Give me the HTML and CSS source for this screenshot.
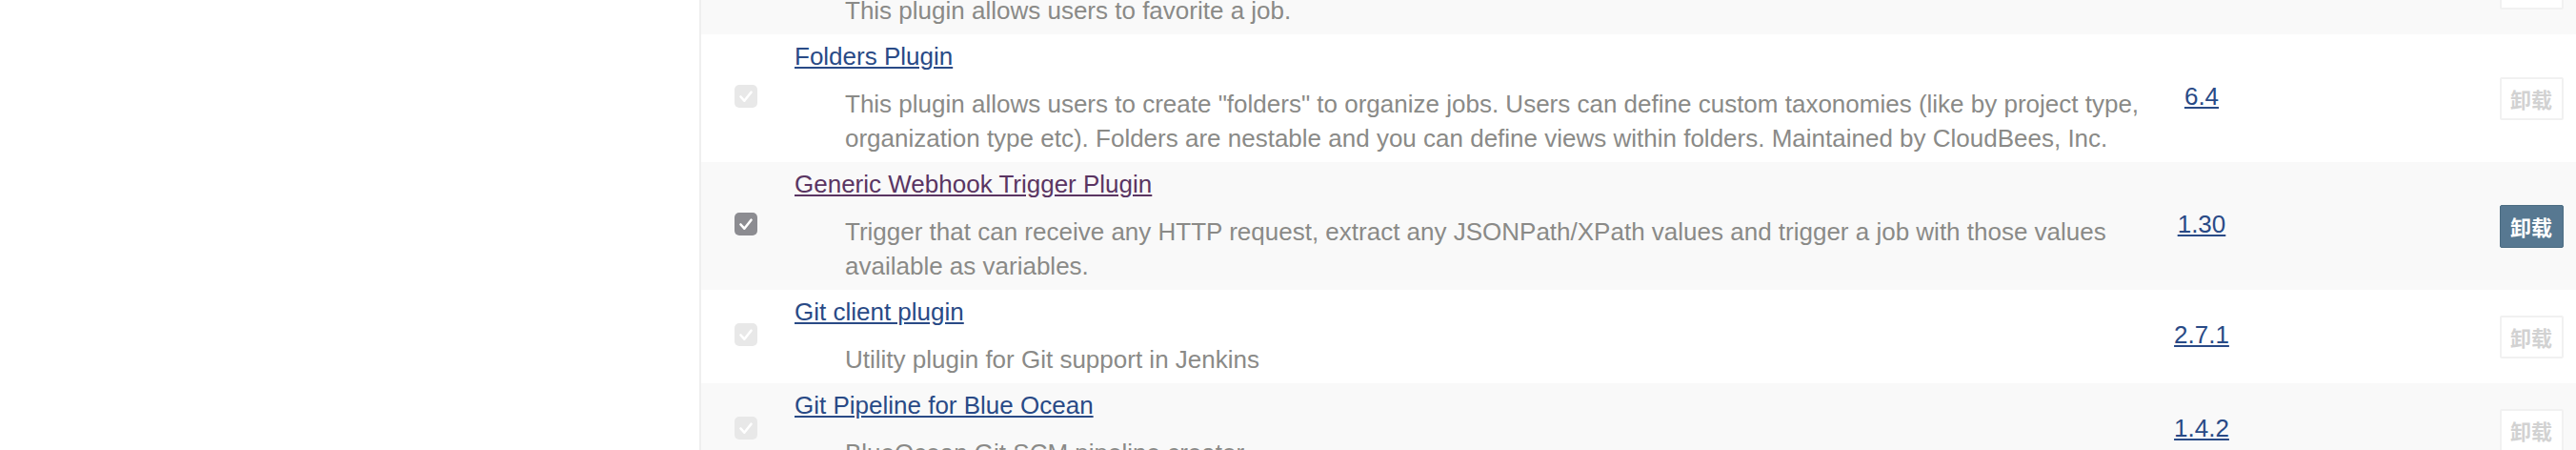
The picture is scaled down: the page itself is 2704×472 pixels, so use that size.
FILE: index.html
```html
<!DOCTYPE html>
<html lang="zh">
<head>
<meta charset="utf-8">
<title>插件管理</title>
<link rel="stylesheet" href="styles.css">
</head>
<body>
<div class="page">
  <div class="side-panel"></div>
  <div class="main-panel">
    <div class="plugins">
      <div class="plugin-row alt">
        <div class="cell-enable"><span class="checkbox disabled"><svg viewBox="0 0 24 24"><path d="M6.5 12.5l3.8 4.2 7.2-9"/></svg></span></div>
        <div class="cell-name">
          <a class="plugin-link" href="#">Favorite</a>
          <div class="excerpt">This plugin allows users to favorite a job.</div>
        </div>
        <div class="cell-version"><a class="plugin-link" href="#">2.3.2</a></div>
        <div class="cell-previous"></div>
        <div class="cell-action"><button class="uninstall" disabled>卸载</button></div>
      </div>
      <div class="plugin-row">
        <div class="cell-enable"><span class="checkbox disabled"><svg viewBox="0 0 24 24"><path d="M6.5 12.5l3.8 4.2 7.2-9"/></svg></span></div>
        <div class="cell-name">
          <a class="plugin-link" href="#">Folders Plugin</a>
          <div class="excerpt">This plugin allows users to create "folders" to organize jobs. Users can define custom taxonomies (like by project type, organization type etc). Folders are nestable and you can define views within folders. Maintained by CloudBees, Inc.</div>
        </div>
        <div class="cell-version"><a class="plugin-link" href="#">6.4</a></div>
        <div class="cell-previous"></div>
        <div class="cell-action"><button class="uninstall" disabled>卸载</button></div>
      </div>
      <div class="plugin-row alt">
        <div class="cell-enable"><span class="checkbox checked"><svg viewBox="0 0 24 24"><path d="M6.5 12.5l3.8 4.2 7.2-9"/></svg></span></div>
        <div class="cell-name">
          <a class="plugin-link visited" href="#">Generic Webhook Trigger Plugin</a>
          <div class="excerpt">Trigger that can receive any HTTP request, extract any JSONPath/XPath values and trigger a job with those values available as variables.</div>
        </div>
        <div class="cell-version"><a class="plugin-link" href="#">1.30</a></div>
        <div class="cell-previous"></div>
        <div class="cell-action"><button class="uninstall active">卸载</button></div>
      </div>
      <div class="plugin-row">
        <div class="cell-enable"><span class="checkbox disabled"><svg viewBox="0 0 24 24"><path d="M6.5 12.5l3.8 4.2 7.2-9"/></svg></span></div>
        <div class="cell-name">
          <a class="plugin-link" href="#">Git client plugin</a>
          <div class="excerpt">Utility plugin for Git support in Jenkins</div>
        </div>
        <div class="cell-version"><a class="plugin-link" href="#">2.7.1</a></div>
        <div class="cell-previous"></div>
        <div class="cell-action"><button class="uninstall" disabled>卸载</button></div>
      </div>
      <div class="plugin-row alt">
        <div class="cell-enable"><span class="checkbox disabled"><svg viewBox="0 0 24 24"><path d="M6.5 12.5l3.8 4.2 7.2-9"/></svg></span></div>
        <div class="cell-name">
          <a class="plugin-link" href="#">Git Pipeline for Blue Ocean</a>
          <div class="excerpt">BlueOcean Git SCM pipeline creator</div>
        </div>
        <div class="cell-version"><a class="plugin-link" href="#">1.4.2</a></div>
        <div class="cell-previous"></div>
        <div class="cell-action"><button class="uninstall" disabled>卸载</button></div>
      </div>
    </div>
  </div>
</div>
</body>
</html>
```
FILE: styles.css
```css
html, body {
  margin: 0;
  padding: 0;
  overflow: hidden;
  background: #ffffff;
}

body {
  font-family: "Liberation Sans", Arial, Helvetica, sans-serif;
  font-size: 26px;
  line-height: 36px;
  color: #333333;
}

.page {
  display: flex;
  width: 2704px;
}

.side-panel {
  width: 734px;
  flex: none;
}

.main-panel {
  flex: 1;
  border-left: 2px solid #efefef;
  margin-top: -62px;
}

.plugins {
  display: flex;
  flex-direction: column;
}

.plugin-row {
  display: grid;
  grid-template-columns: 94px 1fr 98px 250px 94px;
  background: #ffffff;
}

.plugin-row.alt {
  background: #f9f9f9;
}

.cell-enable {
  display: flex;
  align-items: center;
  justify-content: center;
  padding-bottom: 4px;
}

.checkbox {
  width: 24px;
  height: 24px;
  border-radius: 5px;
  display: flex;
  align-items: center;
  justify-content: center;
}

.checkbox svg {
  width: 24px;
  height: 24px;
  fill: none;
  stroke: #ffffff;
  stroke-width: 2.6;
  stroke-linecap: round;
  stroke-linejoin: round;
}

.checkbox.disabled {
  background: #e8e8e8;
}

.checkbox.checked {
  background: #8c8c91;
}

.cell-name {
  padding: 5px 4px 7px 4px;
}

.plugin-link {
  color: #294a86;
  text-decoration: underline;
}

.plugin-link.visited {
  color: #5a3562;
}

.excerpt {
  margin-top: 14px;
  padding-left: 53px;
  color: #8a8a87;
}

.cell-version {
  display: flex;
  align-items: center;
  justify-content: center;
  padding-bottom: 4px;
}

.cell-action {
  display: flex;
  align-items: center;
  justify-content: center;
}

.uninstall {
  width: 67px;
  height: 45px;
  padding: 0;
  font-family: "Noto Sans CJK SC", "Liberation Sans", sans-serif;
  font-size: 22px;
  font-weight: bold;
  line-height: 1;
  border-radius: 2px;
  background: #ffffff;
  border: 2px solid #f1f1f1;
  color: #d2d2d2;
}

.uninstall.active {
  background: #577891;
  border: 1px solid #4b6c82;
  color: #ffffff;
}
```
